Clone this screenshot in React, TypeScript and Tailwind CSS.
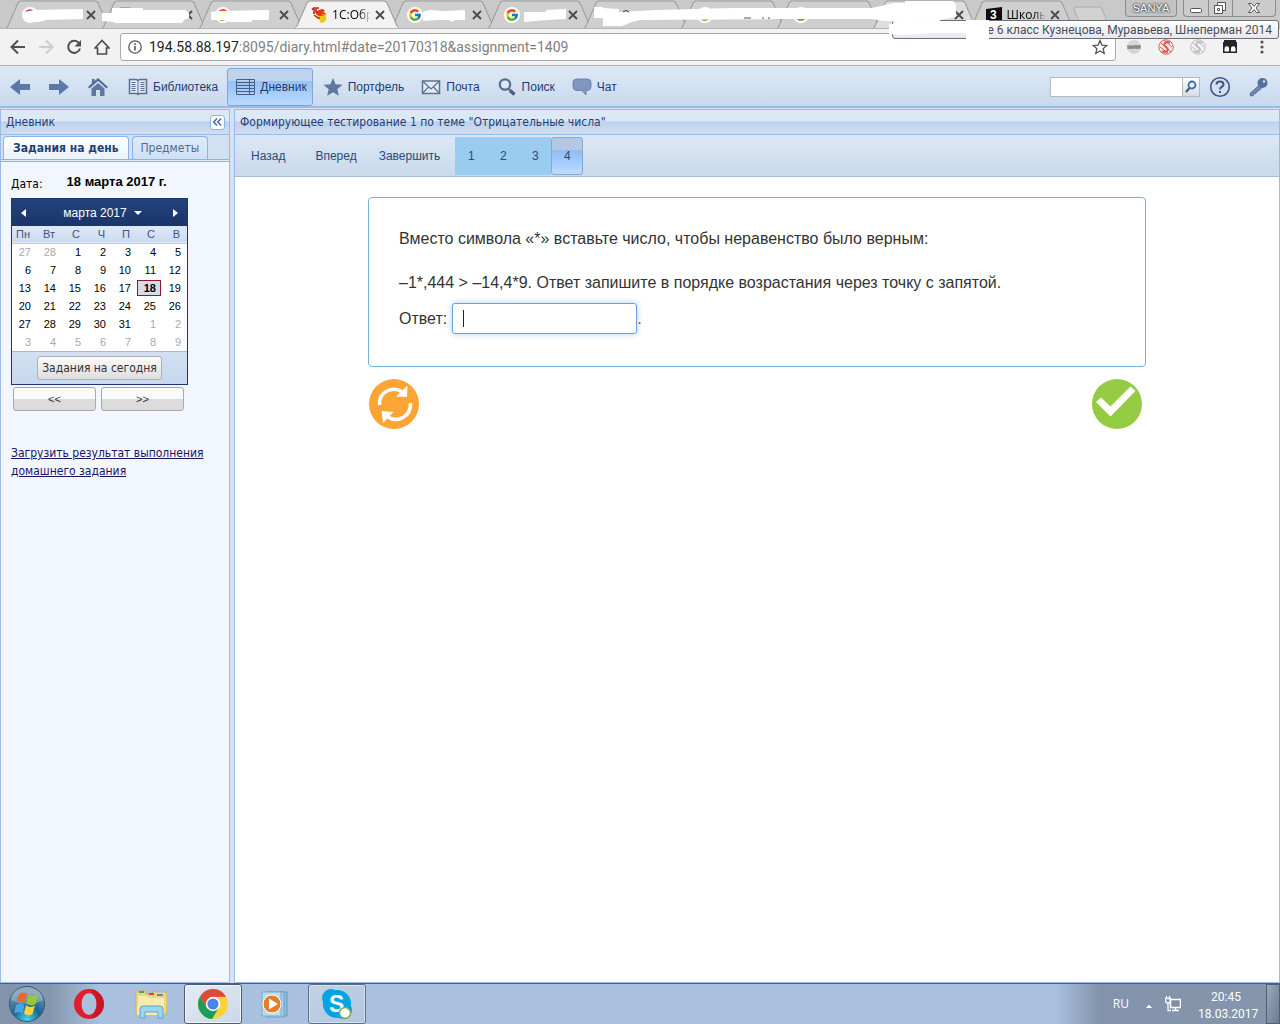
import React from 'react';
import { FcGoogle } from 'react-icons/fc';

const tabs = [
  { id: 1, icon: 'opera', title: '' },
  { id: 2, icon: 'orange', title: '' },
  { id: 3, icon: 'google', title: '' },
  { id: 4, icon: 'bird', title: '1С:Обр', active: true },
  { id: 5, icon: 'google', title: '' },
  { id: 6, icon: 'google', title: '' },
  { id: 7, icon: 'none', title: '', covered: true },
  { id: 8, icon: 'google', title: '', covered: true },
  { id: 9, icon: 'google', title: '', covered: true },
  { id: 10, icon: 'none', title: '', light: true },
  { id: 11, icon: 'znanija', title: 'Школь' }
];

const weekDays = ['Пн', 'Вт', 'С', 'Ч', 'П', 'С', 'В'];

const weeks = [
  [27, 28, 1, 2, 3, 4, 5],
  [6, 7, 8, 9, 10, 11, 12],
  [13, 14, 15, 16, 17, 18, 19],
  [20, 21, 22, 23, 24, 25, 26],
  [27, 28, 29, 30, 31, 1, 2],
  [3, 4, 5, 6, 7, 8, 9]
];

const isOtherMonth = (week: number, day: number) => (week === 0 && day > 20) || (week > 3 && day < 10);

const TabIcon: React.FC<{ name: string }> = ({ name }) => {
  if (name === 'google') {
    return (
      <span className="flex h-4 w-4 shrink-0 items-center justify-center rounded-full bg-white">
        <FcGoogle className="h-[14px] w-[14px]" />
      </span>
    );
  }
  if (name === 'opera') {
    return (
      <svg viewBox="0 0 16 16" className="h-4 w-4 shrink-0">
        <circle cx="8" cy="8" r="8" fill="#fff" />
        <path d="M3 5a6 6 0 0 1 10 0z" fill="#b8453f" />
      </svg>
    );
  }
  if (name === 'orange') {
    return (
      <svg viewBox="0 0 16 16" className="h-4 w-4 shrink-0">
        <rect x="1" y="0" width="12" height="14" rx="2" fill="#e8964a" />
      </svg>
    );
  }
  if (name === 'bird') {
    return (
      <svg viewBox="0 0 16 16" className="h-4 w-4 shrink-0">
        <path d="M6 9l5-2 4 2 .5 3-2 3-3 1-2-1 1-2-3-1z" fill="#e5c91c" />
        <path d="M6 6l2-3 3-1 2 2 1 2 1.500 1-1.500 1.500-4 .5-5-1z" fill="#f08a1d" />
        <path d="M5 5l3-2 4-1 2 2-3 1 4 2-5 0 2 2-4 0-3-2z" fill="#e03a1c" />
        <path d="M1 2.500l2-1.500v6M8 1H5v4h2" fill="none" stroke="#d11a1a" strokeWidth="1.600" />
        <path d="M3 8l4 3 2 0" fill="none" stroke="#c9281a" strokeWidth="1.500" />
      </svg>
    );
  }
  if (name === 'znanija') {
    return (
      <svg viewBox="0 0 16 16" className="h-4 w-4 shrink-0">
        <path d="M0 2l16-2v14l-16 1z" fill="#0c0c0c" />
        <text x="4" y="12" fontSize="12" fontWeight="bold" fill="#fff" fontFamily="Liberation Sans, sans-serif">3</text>
      </svg>
    );
  }
  return <span className="h-4 w-4 shrink-0" />;
};

const BrowserTab: React.FC<{ tab: (typeof tabs)[number] }> = ({ tab }) => (
  <div className={tab.active ? 'relative z-10 min-w-0 flex-1' : 'relative min-w-0 flex-1'}>
    <svg viewBox="0 0 104 28" preserveAspectRatio="none" className="absolute top-0 left-0 h-7 w-[108%]">
      <path
        d="M0 28Q1 28 2 26L12 3Q13 1 15 1H89Q91 1 92 3L102 26Q103 28 104 28"
        fill={tab.active ? '#f2f2f2' : tab.light ? '#dedede' : '#cfcfcf'}
        stroke="#9b9b9b"
      />
      {tab.active && <path d="M1 28H103" stroke="#f2f2f2" strokeWidth="2" />}
    </svg>
    <div className="relative flex h-7 items-center pt-[2px] pr-[6px] pl-4">
      <TabIcon name={tab.icon} />
      <span className="ml-[5px] h-[18px] flex-1 overflow-hidden bg-linear-to-r from-black from-70% to-transparent bg-clip-text font-['Open_Sans','Noto_Sans',sans-serif] text-[12px] leading-[18px] whitespace-nowrap text-transparent">
        {tab.title}
      </span>
      {!tab.covered && (
        <button aria-label="Закрыть вкладку" className="ml-1 shrink-0">
          <svg viewBox="0 0 10 10" className="h-[10px] w-[10px]">
            <path d="M1 1l8 8M9 1L1 9" stroke="#4a4a4a" strokeWidth="1.800" />
          </svg>
        </button>
      )}
    </div>
  </div>
);

const WindowButtons: React.FC = () => (
  <div className="flex h-[17px] shrink-0 items-stretch gap-[6px] pr-1">
    <div className="flex w-[52px] items-center justify-center rounded-b border border-t-0 border-[#8c8c8c] bg-[#c3c3c3] font-['Liberation_Sans',sans-serif] text-[11px] text-white [text-shadow:0_0_2px_#222,0_0_2px_#222]">
      SANYA
    </div>
    <div className="flex w-[93px] divide-x divide-[#8c8c8c] rounded-b border border-t-0 border-[#8c8c8c] bg-[#cbcbcb]">
      <button aria-label="Свернуть" className="flex flex-1 items-center justify-center">
        <svg viewBox="0 0 14 12" className="h-3 w-[14px]"><rect x="1.500" y="6.500" width="11" height="4" rx="1" fill="#fff" stroke="#555" /></svg>
      </button>
      <button aria-label="Восстановить" className="flex flex-1 items-center justify-center">
        <svg viewBox="0 0 14 13" className="h-[13px] w-[14px]" fill="#fff" stroke="#555">
          <path d="M4.500.5h8v8h-8z" /><path d="M1.500 3.500h8v8h-8z" /><path d="M4.500 6.500h2v2h-2z" />
        </svg>
      </button>
      <button aria-label="Закрыть" className="flex w-[42px] items-center justify-center">
        <svg viewBox="0 0 14 12" className="h-3 w-[14px]">
          <path d="M1.500 1.500h3l2.500 3 2.500-3h3L9 6l3.500 4.500h-3L7 7.500l-2.500 3h-3L5 6z" fill="#fff" stroke="#555" />
        </svg>
      </button>
    </div>
  </div>
);

/* Painted-over strokes that hide the tab captions */
const Strokes: React.FC = () => (
  <svg viewBox="0 0 1280 46" className="pointer-events-none absolute top-0 left-0 z-30 h-[46px] w-[1280px]" fill="#fff">
    <path d="M24 12L34 10L83 9V19L46 20L39 22H28L24 18Z" />
    <path d="M102 13H112V8H143V10H185L189 13V18L184 20L182 23H114V22L102 21Z" />
    <path d="M211 12L218 11L269 10V20H252V22H230L222 20H211Z" />
    <path d="M423 12L429 10L444 11L465 10V20H455L452 22L449 20H437L423 21Z" />
    <path d="M524 12H546V10L566 9V19L546 20L524 22Z" />
    <path d="M594 7H603V8L619 9V12L656 10L734 8H872L885 5L895 3H905V1H953L956 5V17L940 20V22H905L885 21L871 19H786L640 20L632 22L622 26H603V18H594Z" />
    <path d="M889 24L919 23H966V20H989V40H966V33H932L902 35L889 34Z" />
    <path d="M623 12q3-3 6 0" fill="none" stroke="#333" />
    <path d="M744 18h7M762 18h2M768 18h2" stroke="#555" />
  </svg>
);

const SavefromIcon: React.FC<{ color: string }> = ({ color }) => (
  <svg viewBox="0 0 16 16" className="h-4 w-4" fill="none" stroke={color}>
    <circle cx="8" cy="8" r="7.200" />
    <path d="M12 4q-3-2-5 0t1 4 1 4-5 0" strokeWidth="2" />
    <path d="M3 4l10 9M2 8l8 6M6 1l8 7" />
  </svg>
);

const BrowserChrome: React.FC = () => (
  <header className="relative overflow-hidden bg-[#c9c9c9]">
    <div className="flex items-start border-b border-[#b5b5b5] pl-[6px]">
      <div className="flex min-w-0 flex-1">
        {tabs.map((tab) => <BrowserTab key={tab.id} tab={tab} />)}
      </div>
      <button aria-label="Новая вкладка" className="mt-[6px] mr-[18px] ml-[7px] shrink-0">
        <svg viewBox="0 0 34 16" className="h-4 w-[34px]"><path d="M1 3q0-2 2-2h23q2 0 3 2l4 10q0 2-2 2H8q-2 0-3-2z" fill="#d2d2d2" stroke="#aaa" /></svg>
      </button>
      <WindowButtons />
    </div>
    <Strokes />
    <div className="absolute top-5 right-px z-20 flex h-[19px] w-[387px] items-center justify-end rounded-[3px] border border-[#6f6f78] bg-linear-to-b from-white to-[#e6e7f1] pr-[6px] font-['Roboto',sans-serif] text-[12px] leading-4 whitespace-nowrap text-[#4c4c54]">
      ике 6 класс Кузнецова, Муравьева, Шнеперман 2014
    </div>
    <div className="flex h-[37px] items-center border-b border-[#b4b4b4] bg-[#f2f2f2] pl-[10px]">
      <div className="flex items-center gap-[12px] text-[#505050]">
        <button aria-label="Назад по истории">
          <svg viewBox="0 0 16 16" className="h-4 w-4" fill="none" stroke="currentColor" strokeWidth="2"><path d="M15 8H2M8 1.500L1.500 8 8 14.500" /></svg>
        </button>
        <button aria-label="Вперед по истории" className="text-[#cdcdcd]">
          <svg viewBox="0 0 16 16" className="h-4 w-4" fill="none" stroke="currentColor" strokeWidth="2"><path d="M1 8h13M8 1.500L14.500 8 8 14.500" /></svg>
        </button>
        <button aria-label="Обновить">
          <svg viewBox="0 0 16 16" className="h-4 w-4"><path d="M13 4.200A6 6 0 1 0 14 9.500" fill="none" stroke="currentColor" strokeWidth="2" /><path d="M15 1v6.500H8.500z" fill="currentColor" /></svg>
        </button>
        <button aria-label="Домашняя страница">
          <svg viewBox="0 0 16 16" className="h-4 w-4" fill="none" stroke="currentColor" strokeWidth="1.700"><path d="M1 9L8 1.500 15 9h-2.500v6h-9V9z" /></svg>
        </button>
      </div>
      <div className="mx-[10px] flex h-7 min-w-0 flex-1 items-center rounded-[3px] border border-[#a9a9a9] bg-white px-[7px]">
        <svg viewBox="0 0 14 14" className="h-[14px] w-[14px] shrink-0"><circle cx="7" cy="7" r="6.200" fill="none" stroke="#555" strokeWidth="1.300" /><path d="M7 6v4.500M7 3.300v1.600" stroke="#555" strokeWidth="1.600" /></svg>
        <a href="#date=20170318&assignment=1409" className="ml-[7px] flex-1 truncate font-['Roboto',sans-serif] text-[14px] text-[#808080]">
          <span className="text-[#222]">194.58.88.197</span>:8095/diary.html#date=20170318&amp;assignment=1409
        </a>
        <button aria-label="Добавить в закладки">
          <svg viewBox="0 0 16 16" className="h-4 w-4"><path d="M8 1.500l1.900 4.600 4.900.4-3.700 3.200 1.100 4.800L8 12l-4.200 2.500 1.100-4.800L1.200 6.500l4.900-.4z" fill="none" stroke="#555" strokeWidth="1.300" /></svg>
        </button>
      </div>
      <div className="flex items-center gap-4 pr-[10px]">
        <svg viewBox="0 0 16 16" className="h-4 w-4"><circle cx="8" cy="8" r="7" fill="#d6d6d6" /><path d="M1 6h14v4H1z" fill="#a4a4a4" /><path d="M3 7v3M5 7v2h2V7M9 9V7h2v3M13 6v3" stroke="#777" fill="none" /></svg>
        <SavefromIcon color="#e0594e" />
        <SavefromIcon color="#bdbdbd" />
        <svg viewBox="0 0 16 16" className="h-4 w-4"><path d="M2 1h12v2h1v11H1V3h1z" fill="#252525" /><path d="M2.500 14V9.500a2.300 2.300 0 0 1 4.600 0V14zM8.900 14V9.500a2.300 2.300 0 0 1 4.600 0V14z" fill="#fff" /><path d="M1 12.500h14V14H1z" fill="#252525" /></svg>
        <button aria-label="Меню"><svg viewBox="0 0 16 16" className="h-4 w-4" fill="#555"><circle cx="8" cy="3" r="1.600" /><circle cx="8" cy="8" r="1.600" /><circle cx="8" cy="13" r="1.600" /></svg></button>
      </div>
    </div>
  </header>
);

const menu = [
  {
    label: 'Библиотека',
    icon: (
      <svg viewBox="0 0 20 18" className="h-[18px] w-5" fill="none" stroke="#596f92">
        <path d="M1.500 1.500h7l1.500 1 1.500-1h7v14h-7l-1.500 1-1.500-1h-7z" strokeWidth="1.500" fill="#e1e9f5" />
        <path d="M10 2.500v14M3.500 4.500h4M3.500 6.500h4M3.500 8.500h4M3.500 10.500h4M12.500 4.500h4M12.500 6.500h4M12.500 8.500h4M12.500 10.500h4M3.500 12.500h4M12.500 12.500h4" />
      </svg>
    )
  },
  {
    label: 'Дневник',
    active: true,
    icon: (
      <svg viewBox="0 0 20 18" className="h-[18px] w-5" fill="none" stroke="#465f85">
        <path d="M.5 1.500h18v15H.5zM.5 4.500h18M.5 7.500h18M.5 10.500h18M.5 13.500h18M13.500 1.500v15" />
      </svg>
    )
  },
  {
    label: 'Портфель',
    icon: (
      <svg viewBox="0 0 20 18" className="h-[18px] w-5">
        <path d="M10 0l2.600 6.200 6.900.5-5.200 4.500 1.600 6.600L10 14.200 4.100 17.800l1.600-6.600L.5 6.700l6.900-.5z" fill="#61789e" />
      </svg>
    )
  },
  {
    label: 'Почта',
    icon: (
      <svg viewBox="0 0 20 18" className="h-[18px] w-5" fill="none" stroke="#5d7192">
        <path d="M1.500 3h17v12.500h-17z" strokeWidth="1.500" fill="#e4ebf5" /><path d="M1.500 3l8.500 8 8.500-8M1.500 15.500L7.500 9M18.500 15.500L12.500 9" strokeWidth="1.200" />
      </svg>
    )
  },
  {
    label: 'Поиск',
    icon: (
      <svg viewBox="0 0 20 18" className="h-[18px] w-5" fill="none">
        <circle cx="8" cy="6.500" r="5.200" stroke="#5b6d88" strokeWidth="2.200" fill="#dfe8f4" /><path d="M11.500 10.500l2 2" stroke="#5b6d88" strokeWidth="2" /><path d="M13 12.500l4.500 4" stroke="#4c5c76" strokeWidth="3.500" />
      </svg>
    )
  },
  {
    label: 'Чат',
    icon: (
      <svg viewBox="0 0 20 18" className="h-[18px] w-5">
        <path d="M5 1h10q4 0 4 3.500v4q0 4-4 4h-1V17l-4-4.500H5q-4 0-4-4v-4Q1 1 5 1z" fill="#8297bd" stroke="#6d82a8" />
      </svg>
    )
  }
];

const AppToolbar: React.FC = () => (
  <nav className="flex h-[42px] items-center border-b-2 border-[#99bbe8] bg-linear-to-b from-[#dde8f5] to-[#c9daef] pt-px pr-[11px] pl-[10px] font-['Liberation_Sans',sans-serif] text-[12px] text-[#1d3d75]">
    <div className="flex gap-[19px] pr-[12px]">
      <button aria-label="Назад"><svg viewBox="0 0 20 18" className="h-[18px] w-5"><path d="M0 9L10 1v5h10v6H10v5z" fill="#5b79a6" /></svg></button>
      <button aria-label="Вперед"><svg viewBox="0 0 20 18" className="h-[18px] w-5"><path d="M20 9L10 1v5H0v6h10v5z" fill="#5b79a6" /></svg></button>
      <button aria-label="Главная"><svg viewBox="0 0 20 18" className="h-[18px] w-5"><path d="M10 0l10 9-1.500 1.500L10 3 1.500 10.500 0 9l4-4V1h2.500v2z" fill="#536d96" /><path d="M3.500 10.500L10 5l6.500 5.500V18H12v-6H8v6H3.500z" fill="#60789f" /></svg></button>
    </div>
    <div className="flex">
      {menu.map((item) => (
        <button
          key={item.label}
          className={
            item.active
              ? 'mr-[2px] flex h-[38px] items-center gap-1 rounded-[3px] border border-[#81a4d0] bg-linear-to-b from-[#bfd3ec] from-33% via-[#98c2f3] via-34% to-[#b7d9ff] pr-[5px] pl-[8px]'
              : 'flex h-[38px] items-center gap-[5px] pr-[9px] pl-2'
          }
        >
          {item.icon}
          <span>{item.label}</span>
        </button>
      ))}
    </div>
    <form className="ml-auto flex h-5 shrink-0">
      <input aria-label="Поиск по сайту" className="h-5 w-[133px] border border-[#b5b8c8] bg-white px-1 outline-none" />
      <button type="button" aria-label="Найти" className="flex w-[17px] items-center justify-center border border-l-0 border-[#b5b8c8] bg-linear-to-b from-white to-[#d5dbe6]">
        <svg viewBox="0 0 14 14" className="h-[14px] w-[14px]" fill="none"><circle cx="8" cy="5" r="3.500" stroke="#3d6cae" strokeWidth="1.800" fill="#e3f0ff" /><path d="M5.500 8L2 12" stroke="#555" strokeWidth="2" /></svg>
      </button>
    </form>
    <button aria-label="Справка" className="ml-[9px] shrink-0">
      <svg viewBox="0 0 22 22" className="h-[22px] w-[22px]" fill="none" stroke="#40587f"><circle cx="11" cy="11" r="9.300" strokeWidth="1.600" fill="#d4e0f1" /><path d="M7.500 8.500q0-3 3.500-3t3.500 3q0 1.500-2 2.500-1.500.8-1.500 2.500" strokeWidth="2" /><path d="M11 15v2" strokeWidth="2" /></svg>
    </button>
    <button aria-label="Вход" className="ml-[18px] shrink-0">
      <svg viewBox="0 0 20 20" className="h-5 w-5"><path d="M10.500 8L1 16.500 1.500 19l3-.5.5-2 2-.2.500-2 2-.3 3.500-3.500z" fill="#7188b0" stroke="#536b92" /><circle cx="13.500" cy="6" r="5" fill="#566f9b" /><circle cx="15" cy="4.500" r="1.200" fill="#d9e4f4" /></svg>
    </button>
  </nav>
);

const Calendar: React.FC = () => (
  <div className="w-[177px] border border-[#1b376c] bg-white font-['Liberation_Sans',sans-serif] text-[11px] text-black">
    <div className="flex h-[27px] items-center justify-between bg-linear-to-b from-[#23427c] to-[#1a3569] px-[9px] text-white">
      <button aria-label="Предыдущий месяц"><svg viewBox="0 0 5 8" className="h-2 w-[5px]"><path d="M5 0v8L0 4z" fill="#fff" /></svg></button>
      <button className="flex items-center gap-[7px] pl-[6px] text-[12px]">
        марта 2017
        <svg viewBox="0 0 8 4" className="h-1 w-2"><path d="M0 0h8L4 4z" fill="#fff" /></svg>
      </button>
      <button aria-label="Следующий месяц"><svg viewBox="0 0 5 8" className="h-2 w-[5px]"><path d="M0 0v8l5-4z" fill="#fff" /></svg></button>
    </div>
    <table className="w-full table-fixed border-collapse">
      <thead>
        <tr className="h-[17px] border-b border-[#b2d0f7] bg-linear-to-b from-[#dfe9f5] to-[#cbdcf0] text-[#3a5580]">
          {weekDays.map((day, index) => <th key={index} className="pr-[7px] text-right font-normal">{day}</th>)}
        </tr>
      </thead>
      <tbody>
        {weeks.map((week, index) => (
          <tr key={index} className="h-[18px]">
            {week.map((day) => (
              <td key={day} className={isOtherMonth(index, day) ? 'p-0 text-right text-[#a9a9a9]' : 'p-0 text-right'}>
                <button
                  className={
                    day === 18
                      ? 'block h-4 w-6 border border-[#8b1a2b] bg-[#d8dbea] pr-1 text-right leading-[14px] font-bold'
                      : 'block h-4 w-full pr-[6px] text-right'
                  }
                >
                  {day}
                </button>
              </td>
            ))}
          </tr>
        ))}
      </tbody>
    </table>
    <div className="flex h-[33px] items-center justify-center border-t border-[#a3bad9] bg-linear-to-b from-[#d3e0f1] to-[#c6d8ef]">
      <button className="h-6 rounded-[3px] border border-[#b0b0b0] bg-linear-to-b from-[#fafafa] to-[#dedede] px-1 font-['DejaVu_Sans_Condensed','DejaVu_Sans',sans-serif] text-[12px] whitespace-nowrap text-[#333]">
        Задания на сегодня
      </button>
    </div>
  </div>
);

const stepButton =
  "h-6 w-[83px] rounded-[3px] border border-[#a9a9a9] bg-linear-to-b from-[#fafafa] from-50% to-[#dcdcdc] to-52% font-['Liberation_Sans',sans-serif] text-[11px] text-[#333]";

const panelHeader =
  'flex h-[25px] items-center border-b border-[#99bbe8] bg-linear-to-b from-[#dde8f6] from-45% via-[#bdd1ee] via-50% to-[#d0def2] px-[5px] text-[12px] text-[#1f3f73]';

const Sidebar: React.FC = () => (
  <aside className="w-[230px] shrink-0 border border-[#99bbe8] bg-[#f2f7ff]">
    <div className={panelHeader}>
      <h2 className="flex-1">Дневник</h2>
      <button aria-label="Свернуть панель" className="-mr-px flex h-[15px] w-[15px] items-center justify-center rounded-[3px] border border-[#8fb2e0] bg-white">
        <svg viewBox="0 0 9 8" className="h-2 w-[9px]"><path d="M4 .5L.8 4 4 7.500M8 .5L4.800 4 8 7.500" fill="none" stroke="#3b6cab" strokeWidth="1.400" /></svg>
      </button>
    </div>
    <div role="tablist" className="flex h-6 items-end gap-[3px] bg-[#d3e0f1] pl-[2px] text-[12px]">
      <button role="tab" aria-selected="true" className="h-[23px] rounded-t-[4px] border border-b-0 border-[#8db2e3] bg-linear-to-b from-white to-[#eaf2fe] px-[9px] font-bold whitespace-nowrap text-[#1f4079]">
        Задания на день
      </button>
      <button role="tab" aria-selected="false" className="h-[23px] rounded-t-[4px] border border-b-0 border-[#8db2e3] bg-linear-to-b from-[#dfebfa] to-[#cfdff4] px-2 text-[#4c6b98]">
        Предметы
      </button>
    </div>
    <div className="h-[3px] border-y border-[#8db2e3] bg-[#deecfd]" />
    <div className="pt-[9px] pl-[10px] text-[12px] text-black">
      <div className="flex h-[27px] items-start gap-6">
        <span className="pt-1">Дата:</span>
        <span className="pt-px font-['Liberation_Sans',sans-serif] text-[13px] font-bold">18 марта 2017 г.</span>
      </div>
      <Calendar />
      <div className="flex gap-[5px] pt-[2px] pl-[2px]">
        <button className={stepButton}>&lt;&lt;</button>
        <button className={stepButton}>&gt;&gt;</button>
      </div>
      <a href="#upload" className="mt-[33px] block leading-[18px] text-[#1b1464] underline">
        Загрузить результат выполнения домашнего задания
      </a>
    </div>
  </aside>
);

const QuizCard: React.FC = () => (
  <div className="mx-auto w-full max-w-[778px] font-['Liberation_Sans',sans-serif] text-[16px] text-[#333]">
    <div className="rounded-[4px] border border-[#6db8d8] px-[30px] pt-[29px] pb-8">
      <p className="leading-6">Вместо символа «*» вставьте число, чтобы неравенство было верным:</p>
      <p className="mt-5 leading-6">–1*,444 &gt; –14,4*9. Ответ запишите в порядке возрастания через точку с запятой.</p>
      <div className="mt-2 flex items-center">
        <label htmlFor="answer">Ответ:</label>
        <div className="relative ml-[5px]">
          <input id="answer" className="block h-[31px] w-[185px] rounded-[3px] border border-[#66a5dc] bg-white px-3 shadow-[0_0_6px_#a9cdf0] outline-none" />
          <span className="absolute top-[7px] left-[11px] h-[17px] w-px bg-[#222]" />
        </div>
        <span>.</span>
      </div>
    </div>
    <div className="flex justify-between pt-3 pr-1 pl-px">
      <button aria-label="Сбросить ответ">
        <svg viewBox="0 0 50 50" className="h-[50px] w-[50px]">
          <circle cx="25" cy="25" r="25" fill="#fca536" />
          <path d="M10.500 26Q10 16 18 12T33 13" fill="none" stroke="#fff" strokeWidth="3.600" />
          <path d="M38.500 6.500L38 18l-11-.5z" fill="#fff" />
          <path d="M41.500 24Q42 34 34 38.500T18 37.500" fill="none" stroke="#fff" strokeWidth="3.600" />
          <path d="M12.500 32l12 1-10.500 11z" fill="#fff" />
        </svg>
      </button>
      <button aria-label="Проверить ответ">
        <svg viewBox="0 0 50 50" className="h-[50px] w-[50px]">
          <circle cx="25" cy="25" r="25" fill="#95ca43" />
          <path d="M4 23l5-4.500 9.500 9L38.500 7.500l5 4.500L18.500 37.500z" fill="#fff" />
        </svg>
      </button>
    </div>
  </div>
);

const Content: React.FC = () => (
  <main className="ml-1 flex min-w-0 flex-1 flex-col border border-[#99bbe8] bg-white">
    <div className={panelHeader}>
      <h1 className="truncate">Формирующее тестирование 1 по теме "Отрицательные числа"</h1>
    </div>
    <div className="flex h-[42px] items-center border-b border-[#a9bfd3] bg-linear-to-b from-[#dce7f3] to-[#c9daec] pl-4 font-['Liberation_Sans',sans-serif] text-[12px] text-[#294a7c]">
      <button className="mr-[30px]">Назад</button>
      <button className="mr-[22px]">Вперед</button>
      <button className="mr-[15px]">Завершить</button>
      {[1, 2, 3].map((step) => (
        <button key={step} className="h-[38px] w-8 bg-[#99ccee]">{step}</button>
      ))}
      <button className="h-[38px] w-8 rounded-[3px] border border-[#8ba6cd] bg-linear-to-b from-[#b3c8e3] from-33% via-[#8dbdf4] via-34% to-[#bddbff]">4</button>
    </div>
    <div className="flex-1 px-4 pt-5">
      <QuizCard />
    </div>
  </main>
);

const OperaIcon = () => (
  <svg viewBox="0 0 32 32" className="h-8 w-8">
    <ellipse cx="16" cy="16" rx="15" ry="15" fill="#df1f2d" />
    <path d="M16 1a15 15 0 0 1 0 30c9-1 9-29 0-30z" fill="#bd1020" opacity=".6" />
    <ellipse cx="16" cy="16" rx="7.500" ry="11" fill="#a9c1de" />
  </svg>
);

const ExplorerIcon = () => (
  <svg viewBox="0 0 32 32" className="h-8 w-8">
    <path d="M1 3h10v3h7V4h12q2 0 2 2v20H1z" fill="#e9d88a" stroke="#c9b15c" />
    <path d="M3 8h9l2 2h15v17H2z" fill="#f7ebae" />
    <path d="M4 3h5v2H4z" fill="#4ca64c" /><path d="M14 5h5v2h-5z" fill="#c94b3f" /><path d="M22 6h6v2h-6z" fill="#4a8ccc" />
    <path d="M5 30V21q0-3 3-3h17q3 0 3 3v9h-5v-6H10v6z" fill="#9fd4ef" stroke="#5aa6cf" />
  </svg>
);

const ChromeIcon = () => (
  <svg viewBox="0 0 32 32" className="h-8 w-8">
    <circle cx="16" cy="16" r="15" fill="#fdd23e" />
    <path d="M3 8.500A15 15 0 0 1 29.100 8.700L16 9 9.500 19.500z" fill="#dc4a3d" />
    <path d="M3 8.500A15 15 0 0 0 15 31l7-11.500-12.200.2z" fill="#1a9d58" />
    <circle cx="16" cy="16" r="7.200" fill="#fff" /><circle cx="16" cy="16" r="5.600" fill="#4a84ee" />
  </svg>
);

const PlayerIcon = () => (
  <svg viewBox="0 0 32 32" className="h-8 w-8">
    <path d="M11 4h17v24H11z" fill="#8cbfe0" stroke="#6498be" /><path d="M7 4h18v25H7z" fill="#a7d1ea" stroke="#6c9fc3" /><path d="M3 4h19v24H3z" fill="#bcdcf0" stroke="#7ba9c9" />
    <circle cx="13" cy="16" r="9" fill="#ea7d23" stroke="#fff" /><path d="M10 10.500v11l9-5.500z" fill="#fff" />
  </svg>
);

const SkypeIcon = () => (
  <svg viewBox="0 0 32 32" className="h-8 w-8">
    <circle cx="10" cy="10" r="9" fill="#00a4e3" /><circle cx="22" cy="22" r="9" fill="#00a4e3" /><circle cx="16" cy="16" r="14" fill="#00a4e3" />
    <text x="8" y="24" fontSize="23" fontWeight="bold" fill="#fff" fontFamily="Liberation Sans, sans-serif">S</text>
    <circle cx="24" cy="25" r="5.500" fill="#fff" stroke="#7fa75b" strokeWidth="1.500" />
  </svg>
);

const apps = [
  { name: 'Opera', icon: <OperaIcon /> },
  { name: 'Проводник', icon: <ExplorerIcon /> },
  { name: 'Google Chrome', icon: <ChromeIcon />, open: true, front: true },
  { name: 'Проигрыватель', icon: <PlayerIcon /> },
  { name: 'Skype', icon: <SkypeIcon />, open: true }
];

const Taskbar: React.FC = () => (
  <footer className="flex h-[41px] items-stretch border-t border-[#4d6078] bg-[#a9c1de] bg-[linear-gradient(90deg,#8293ab,#8496ae_50px,transparent_100px),linear-gradient(270deg,#8495ac,#8293ab_180px,transparent_225px)] font-['Open_Sans','Noto_Sans',sans-serif] text-[12px] text-white">
    <button aria-label="Пуск" className="flex w-14 items-center justify-center pr-[2px]">
      <svg viewBox="0 0 38 38" className="h-[38px] w-[38px]">
        <defs>
          <radialGradient id="orb" cx="50%" cy="95%" r="80%">
            <stop offset="0" stopColor="#3fd8f5" /><stop offset=".5" stopColor="#1d6394" /><stop offset="1" stopColor="#6c91ad" />
          </radialGradient>
        </defs>
        <circle cx="19" cy="19" r="17.500" fill="url(#orb)" stroke="#32556f" />
        <path d="M3 15a16 13 0 0 1 32 0Q19 24 3 15z" fill="#fff" opacity=".25" />
        <path d="M11 9q4-3 8 0l-2 9q-4-3-8.500 0z" fill="#ea6a2c" />
        <path d="M20.500 9.500q4 3 10 .5l-3 9q-4 3-9-.5z" fill="#95c93d" />
        <path d="M8 20q4-3 8.500 0l-2 8.500q-4-3-8.500 0z" fill="#4ba4e0" />
        <path d="M18 20q4 3.500 9 .5l-2.500 8.500q-4 3-8.500-.5z" fill="#fbd13a" />
      </svg>
    </button>
    <div className="flex gap-1 pl-1">
      {apps.map((app) => (
        <button
          key={app.name}
          aria-label={app.name}
          className={
            app.front
              ? 'flex w-[58px] items-center justify-center rounded-[3px] border border-[#4a5d75] bg-linear-to-br from-[#e4ebf4] to-[#cbd8e9] shadow-[inset_0_0_0_1px_#f2f6fb]'
              : app.open
                ? 'flex w-[58px] items-center justify-center rounded-[3px] border border-[#5c7089] bg-linear-to-br from-[#c3d1e3] to-[#b2c7e1] shadow-[inset_0_0_0_1px_#d5e0ee]'
                : 'flex w-[58px] items-center justify-center'
          }
        >
          {app.icon}
        </button>
      ))}
    </div>
    <div className="ml-auto flex items-center">
      <span>RU</span>
      <svg viewBox="0 0 8 5" className="mt-1 ml-4 h-[5px] w-2"><path d="M4 0l4 4.500H0z" fill="#fff" stroke="#556" strokeWidth=".5" /></svg>
      <svg viewBox="0 0 16 16" className="ml-3 h-4 w-4"><path d="M5.500 3.500h10v8h-10zM7 14.500h7M10.500 12v2" fill="#7f8fa6" stroke="#fff" strokeWidth="1.500" /><path d="M.5 2.500h5v3l-1.500 1.500h-2L.5 5.500zM1.500 0v2M4.500 0v2M3 7v7.500h3" fill="none" stroke="#fff" strokeWidth="1.300" /></svg>
      <div className="ml-[17px] w-[56px] pt-1 text-center font-['Roboto',sans-serif] leading-[17px]">
        <div>20:45</div>
        <div>18.03.2017</div>
      </div>
    </div>
    <button aria-label="Свернуть все окна" className="ml-3 w-[14px] border border-[#4f5f76] bg-linear-to-br from-[#9aa8ba] to-[#6d7c92]" />
  </footer>
);

const App: React.FC = () => {
  return (
    <div className="flex min-h-screen flex-col bg-[#d5e2f2] font-['DejaVu_Sans_Condensed','DejaVu_Sans',sans-serif]">
      <BrowserChrome />
      <AppToolbar />
      <div className="flex flex-1 pt-px">
        <Sidebar />
        <Content />
      </div>
      <Taskbar />
    </div>
  );
};

export default App;
